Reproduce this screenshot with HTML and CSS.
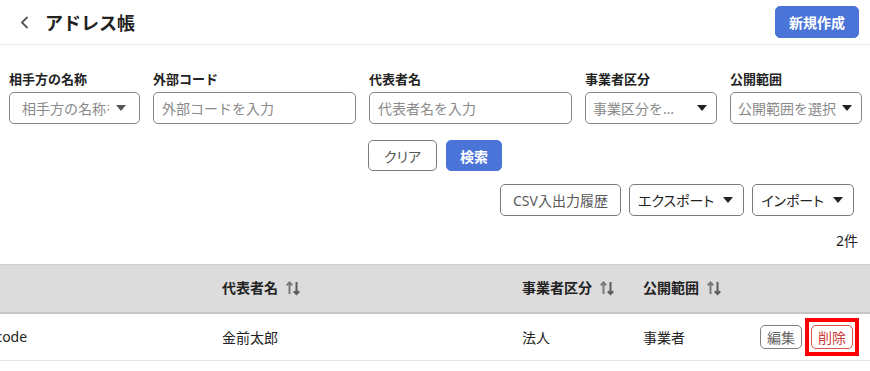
FILE: index.html
```html
<!DOCTYPE html>
<html lang="ja">
<head>
  <meta charset="UTF-8" />
  <meta name="viewport" content="width=device-width, initial-scale=1.0" />
  <title>アドレス帳</title>
  <link rel="stylesheet" href="styles.css">
</head>
<body>

  <!-- header -->
  <header class="page-header">
    <button class="back" aria-label="戻る">
      <svg width="9" height="13" viewBox="0 0 9 13"><path d="M7 1.5 L2 6.5 L7 11.5" fill="none" stroke="#555" stroke-width="1.8" stroke-linecap="round" stroke-linejoin="round"/></svg>
    </button>
    <h1>アドレス帳</h1>
    <button class="btn btn-primary btn-new">新規作成</button>
  </header>

  <!-- filters -->
  <section class="filters">
    <div class="field">
      <label>相手方の名称</label>
      <div class="control combo">
        <span class="value clip">相手方の名称を入力</span>
        <svg class="caret" width="10" height="6" viewBox="0 0 10 6"><path d="M0 0 H10 L5 6 Z" fill="#555"/></svg>
      </div>
    </div>
    <div class="field">
      <label>外部コード</label>
      <div class="control"><span class="value">外部コードを入力</span></div>
    </div>
    <div class="field">
      <label>代表者名</label>
      <div class="control"><span class="value">代表者名を入力</span></div>
    </div>
    <div class="field">
      <label>事業者区分</label>
      <div class="control select select-clearable">
        <span class="value ellipsis">事業区分を選択</span>
        <svg class="caret" width="10" height="6" viewBox="0 0 10 6"><path d="M0 0 H10 L5 6 Z" fill="#222"/></svg>
      </div>
    </div>
    <div class="field">
      <label>公開範囲</label>
      <div class="control select">
        <span class="value ellipsis">公開範囲を選択</span>
        <svg class="caret" width="10" height="6" viewBox="0 0 10 6"><path d="M0 0 H10 L5 6 Z" fill="#222"/></svg>
      </div>
    </div>
  </section>

  <div class="search-actions">
    <button class="btn btn-outline">クリア</button>
    <button class="btn btn-primary">検索</button>
  </div>

  <div class="csv-actions">
    <button class="btn btn-outline btn-muted">CSV入出力履歴</button>
    <button class="btn btn-outline btn-dark">エクスポート
      <svg class="caret" width="10" height="6" viewBox="0 0 10 6"><path d="M0 0 H10 L5 6 Z" fill="#222"/></svg>
    </button>
    <button class="btn btn-outline btn-dark">インポート
      <svg class="caret" width="10" height="6" viewBox="0 0 10 6"><path d="M0 0 H10 L5 6 Z" fill="#222"/></svg>
    </button>
  </div>

  <p class="count">2件</p>

  <!-- list -->
  <div class="table-wrap">
    <table class="list">
      <colgroup>
        <col style="width:333px">
        <col style="width:300px">
        <col style="width:121px">
        <col style="width:120px">
        <col>
      </colgroup>
      <thead>
        <tr>
          <th>外部コード <span class="sort"></span></th>
          <th>代表者名 <span class="sort"></span></th>
          <th>事業者区分 <span class="sort"></span></th>
          <th>公開範囲 <span class="sort"></span></th>
          <th></th>
        </tr>
      </thead>
      <tbody>
        <tr>
          <td>sample-partner-code</td>
          <td>金前太郎</td>
          <td>法人</td>
          <td>事業者</td>
          <td class="row-actions">
            <div class="row-buttons">
              <button class="btn-sm">編集</button>
              <button class="btn-sm btn-danger marked">削除</button>
            </div>
          </td>
        </tr>
      </tbody>
    </table>
  </div>

  <script>
    // sort icon
    const sortIcon = '<svg width="16" height="16" viewBox="0 0 16 16">' +
      '<path d="M4.5 14 V2.5 M1.8 5.2 L4.5 2.5 L7.2 5.2" fill="none" stroke="#7a7a7a" stroke-width="2"/>' +
      '<path d="M11.5 2 V14 M8.8 11.3 L11.5 14 L14.2 11.3" fill="none" stroke="#5c5c5c" stroke-width="2"/>' +
      '</svg>';
    document.querySelectorAll('.sort').forEach(el => {
      el.innerHTML = sortIcon;
    });
  </script>
</body>
</html>
```

FILE: styles.css
```css
body {
  margin: 0;
  font-family: "Noto Sans", "Noto Sans CJK JP", sans-serif;
  font-size: 14px;
  color: #222;
  background: #fff;
}

button {
  font-family: inherit;
  font-size: 14px;
}

.page-header {
  display: flex;
  align-items: center;
  height: 44px;
  padding: 0 11px 0 16px;
  border-bottom: 1px solid #e8e8e8;
}

.back {
  display: flex;
  align-items: center;
  background: none;
  border: none;
  padding: 0 4px;
  margin-right: 12px;
  cursor: pointer;
}

.page-header h1 {
  margin: 0;
  font-size: 18px;
  font-weight: 700;
  color: #222;
}

.btn {
  display: inline-flex;
  align-items: center;
  gap: 9px;
  height: 32px;
  padding: 0 13px;
  border-radius: 5px;
  cursor: pointer;
  box-sizing: border-box;
}

.btn-primary {
  background: #4a74d8;
  border: 1px solid #4a74d8;
  color: #fff;
  font-weight: 700;
}

.btn-new {
  margin-left: auto;
  padding: 0 13px;
}

.btn-outline {
  background: #fff;
  border: 1px solid #7a7a7a;
  color: #555;
  font-feature-settings: "palt";
}

.btn-muted {
  color: #5a5a5a;
}

.btn-dark {
  color: #222;
  padding: 0 10px 0 8px;
}

.filters {
  display: grid;
  grid-template-columns: minmax(0, 131fr) minmax(0, 203fr) minmax(0, 203fr) minmax(0, 132fr) minmax(0, 132fr);
  gap: 13px;
  padding: 25px 8px 0 9px;
}

.field label {
  display: block;
  font-size: 13px;
  font-weight: 700;
  line-height: 18px;
  margin-bottom: 4px;
  color: #222;
}

.control {
  display: flex;
  align-items: center;
  height: 32px;
  padding: 0 8px;
  border: 1px solid #858585;
  border-radius: 5px;
  box-sizing: border-box;
  color: #8a8a8a;
  font-size: 14px;
}

.control .value {
  flex: 1;
  min-width: 0;
  white-space: nowrap;
  overflow: hidden;
}

.control .clip {
  text-overflow: clip;
}

.control .ellipsis {
  text-overflow: ellipsis;
}

.combo {
  padding: 0 13px 0 12px;
  gap: 7px;
}

.select {
  padding: 0 9px 0 7px;
  gap: 6px;
}

.select-clearable {
  gap: 19px;
}

.search-actions {
  display: flex;
  justify-content: center;
  gap: 9px;
  margin-top: 16px;
}

.search-actions .btn {
  height: 31px;
}

.search-actions .btn-outline {
  padding: 0 15px;
}

.csv-actions {
  display: flex;
  justify-content: flex-end;
  gap: 8px;
  margin-top: 13px;
  padding-right: 16px;
}

.csv-actions .btn-muted {
  padding: 0 12px;
}

.count {
  margin: 16px 12px 0 0;
  text-align: right;
  line-height: 18px;
  color: #222;
}

.table-wrap {
  margin-top: 14px;
  overflow: hidden;
}

.list {
  margin-left: -123px;
  width: calc(100% + 123px);
  border-collapse: collapse;
  table-layout: fixed;
}

.list th {
  height: 48px;
  padding: 0 12px;
  background: #dcdcdc;
  border-top: 1px solid #cfcfcf;
  border-bottom: 2px solid #c6c6c6;
  text-align: left;
  font-weight: 700;
  white-space: nowrap;
  box-sizing: border-box;
}

.sort {
  display: inline-block;
  vertical-align: -3px;
  margin-left: 3px;
}

.list td {
  height: 48px;
  padding: 0 12px;
  border-bottom: 1px solid #e4e4e4;
  white-space: nowrap;
  box-sizing: border-box;
}

.row-actions {
  padding-right: 17px !important;
}

.row-buttons {
  display: flex;
  justify-content: flex-end;
  gap: 9px;
}

.btn-sm {
  height: 24px;
  padding: 0 6px;
  background: #fff;
  border: 1px solid #808080;
  border-radius: 5px;
  color: #666;
  cursor: pointer;
}

.btn-danger {
  border-color: #d9534f;
  color: #cf3c3c;
}

/* red marker box around the delete button */
.marked {
  position: relative;
}

.marked::after {
  content: "";
  position: absolute;
  inset: -8px -7px;
  border: 4px solid #ff0000;
}
```
